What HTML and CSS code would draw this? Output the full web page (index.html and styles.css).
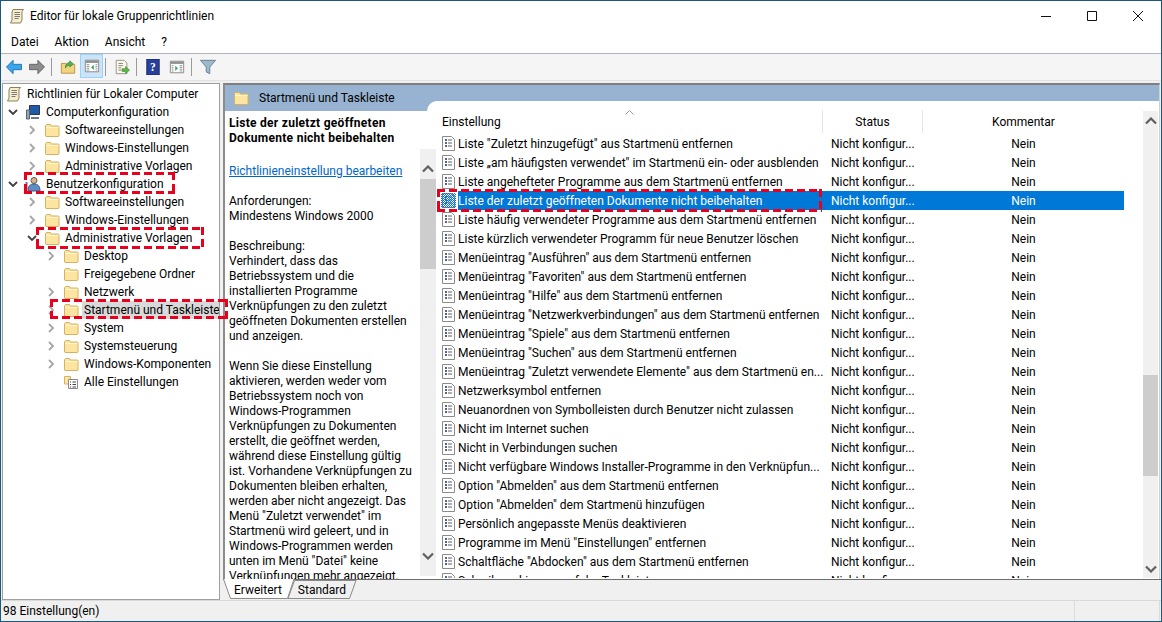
FILE: index.html
```html
<!DOCTYPE html>
<html lang="de">
<head>
<meta charset="utf-8">
<title>Editor für lokale Gruppenrichtlinien</title>
<link rel="stylesheet" href="styles.css">
</head>
<body>
<svg class="defs" width="0" height="0" aria-hidden="true">
  <defs>
    <symbol id="folder" viewBox="0 0 16 16">
      <path d="M1.500 14V3.500l1-1h4l1 1.500h7l.5.5V14l-.5.5h-12.500z" fill="#fbe5a0" stroke="#d4b25f"/>
      <path d="M2 5.500h12.500" stroke="#fff4cf" fill="none"/>
    </symbol>
    <symbol id="doc" viewBox="0 0 13 15">
      <path d="M.5.500h9l3 3v11H.5z" fill="#fff" stroke="#8b8b8b"/>
      <path d="M3 4h2M3 7h2M3 10h2" stroke="#1f2f5f" stroke-width="1.500" fill="none"/>
      <path d="M6 4h4M6 7h4M6 10h4" stroke="#5a5a6a" fill="none"/>
    </symbol>
    <symbol id="scroll" viewBox="0 0 16 16">
      <path d="M4 1.500h10.500l-1.500 2V12l-1.500 3H1.500l1.500-3V4z" fill="#f6eec9" stroke="#8a7f5a"/>
      <path d="M5.500 4.500h5.500M5.500 6.500h5.500M5.500 8.500h5.500M5.500 10.500h4" stroke="#7a7a7a" fill="none"/>
    </symbol>
    <symbol id="more" viewBox="0 0 10 10">
      <path d="M3 1l4 4-4 4" fill="none" stroke="#a6a6a6" stroke-width="1.800"/>
    </symbol>
    <symbol id="open" viewBox="0 0 10 10">
      <path d="M1 3l4 4 4-4" fill="none" stroke="#404040" stroke-width="1.800"/>
    </symbol>
    <symbol id="up" viewBox="0 0 12 8">
      <path d="M1 6.500l5-5 5 5" fill="none" stroke="#606060" stroke-width="2.200"/>
    </symbol>
    <symbol id="down" viewBox="0 0 12 8">
      <path d="M1 1.500l5 5 5-5" fill="none" stroke="#606060" stroke-width="2.200"/>
    </symbol>
  </defs>
</svg>

<div class="window">
  <header class="titlebar">
    <svg class="ico16 title-ico"><use href="#scroll"/></svg>
    <span class="title-text">Editor für lokale Gruppenrichtlinien</span>
    <div class="caption">
      <svg class="cap" viewBox="0 0 46 12"><path d="M18 6.500h10" stroke="#111" fill="none"/></svg>
      <svg class="cap" viewBox="0 0 46 12"><path d="M18.500 1.500h9v9h-9z" stroke="#111" fill="none"/></svg>
      <svg class="cap" viewBox="0 0 46 12"><path d="M18 1l10 10M28 1L18 11" stroke="#111" fill="none"/></svg>
    </div>
  </header>

  <nav class="menubar">
    <span>Datei</span><span>Aktion</span><span>Ansicht</span><span>?</span>
  </nav>

  <div class="toolbar">
    <svg class="tool tool-back" viewBox="0 0 18 18"><path d="M.5 9L8 1.500V6h9.500v6H8v4.500z" fill="#3ba5ea" stroke="#1f6fb5"/></svg>
    <svg class="tool" viewBox="0 0 18 18"><path d="M17.500 9L10 1.500V6H.5v6H10v4.500z" fill="#8d8d8d" stroke="#5f5f5f"/></svg>
    <i class="sep"></i>
    <svg class="tool" viewBox="0 0 18 18"><path d="M1.500 16V5h5l1 1h9v10z" fill="#f3d37f" stroke="#b5923f"/><path d="M6 10c0-4 2-6 5-6V2l4 3.500L11 9V7c-2 0-3 1-5 3z" fill="#55b04a" stroke="#2f7f2f" stroke-width=".7"/></svg>
    <span class="tool-on"><svg class="tool" viewBox="0 0 18 18"><path d="M1.500 2.500h15v13h-15z" fill="#fff" stroke="#7f7f7f"/><path d="M2 3h14v2.500H2z" fill="#8f8f8f"/><path d="M3 7.500h3M3 9.500h3M3 11.500h3M3 13.500h3M13 7.500h2M13 9.500h2M13 11.500h2M13 13.500h2" stroke="#8a8a8a" fill="none"/><path d="M11 7.500v6L8 10.500z" fill="#2fa84f"/></svg></span>
    <i class="sep"></i>
    <svg class="tool" viewBox="0 0 18 18"><path d="M2.500 1.500h9l3 3v12h-12z" fill="#fdf9e8" stroke="#8c8c8c"/><path d="M5 5h5M5 7.500h5M5 10h3M5 12.500h3" stroke="#777" fill="none"/><path d="M9 11h4V8.500l4.500 4-4.500 4V14H9z" fill="#5cb84a" stroke="#3a8a2f" stroke-width=".7"/></svg>
    <i class="sep"></i>
    <svg class="tool" viewBox="0 0 18 18"><path d="M2 0h14v18H2z" fill="#27409a" stroke="#18286a"/><text x="9" y="14" class="help-q">?</text></svg>
    <svg class="tool" viewBox="0 0 18 18"><path d="M1.500 2.500h15v13h-15z" fill="#fff" stroke="#7f7f7f"/><path d="M2 3h14v2.500H2z" fill="#8f8f8f"/><path d="M3 7.500h2M3 9.500h2M3 11.500h2M3 13.500h2M12 7.500h3M12 9.500h3M12 11.500h3M12 13.500h3" stroke="#8a8a8a" fill="none"/><path d="M7 7.500v6l3-3z" fill="#2fa84f"/></svg>
    <i class="sep"></i>
    <svg class="tool" viewBox="0 0 18 18"><path d="M.5 1.500h17L11 9v7.500l-4-2V9z" fill="#9fb9cc" stroke="#5f7a8f"/></svg>
  </div>

  <main class="panes">
    <aside class="tree">
      <div class="node d0"><svg class="tw"></svg><svg class="ico16"><use href="#scroll"/></svg><span>Richtlinien für Lokaler Computer</span></div>
      <div class="node d1"><svg class="tw"><use href="#open"/></svg><svg class="ico16" viewBox="0 0 16 16"><path d="M4.500 1.500h10v9h-10z" fill="#1f5aa8" stroke="#334"/><path d="M1.500 6h3v9h-3z" fill="#9aa5b0" stroke="#567"/><path d="M6 13h8v2H6z" fill="#6a7a8a"/></svg><span>Computerkonfiguration</span></div>
      <div class="node d2"><svg class="tw"><use href="#more"/></svg><svg class="ico16"><use href="#folder"/></svg><span>Softwareeinstellungen</span></div>
      <div class="node d2"><svg class="tw"><use href="#more"/></svg><svg class="ico16"><use href="#folder"/></svg><span>Windows-Einstellungen</span></div>
      <div class="node d2"><svg class="tw"><use href="#more"/></svg><svg class="ico16"><use href="#folder"/></svg><span>Administrative Vorlagen</span></div>
      <div class="node d1"><svg class="tw"><use href="#open"/></svg><svg class="ico16" viewBox="0 0 16 16"><circle cx="9" cy="4.500" r="3" fill="#d8b48c" stroke="#6a5a4a"/><path d="M3 15c0-5 2-7 6-7s6 2 6 7z" fill="#5b8ec4" stroke="#3a5f8a"/><path d="M1.500 6v8" stroke="#777" stroke-width="2"/></svg><span>Benutzerkonfiguration</span></div>
      <div class="node d2"><svg class="tw"><use href="#more"/></svg><svg class="ico16"><use href="#folder"/></svg><span>Softwareeinstellungen</span></div>
      <div class="node d2"><svg class="tw"><use href="#more"/></svg><svg class="ico16"><use href="#folder"/></svg><span>Windows-Einstellungen</span></div>
      <div class="node d2"><svg class="tw"><use href="#open"/></svg><svg class="ico16"><use href="#folder"/></svg><span>Administrative Vorlagen</span></div>
      <div class="node d3"><svg class="tw"><use href="#more"/></svg><svg class="ico16"><use href="#folder"/></svg><span>Desktop</span></div>
      <div class="node d3"><svg class="tw"></svg><svg class="ico16"><use href="#folder"/></svg><span>Freigegebene Ordner</span></div>
      <div class="node d3"><svg class="tw"><use href="#more"/></svg><svg class="ico16"><use href="#folder"/></svg><span>Netzwerk</span></div>
      <div class="node d3 sel"><svg class="tw"><use href="#more"/></svg><svg class="ico16"><use href="#folder"/></svg><span>Startmenü und Taskleiste</span></div>
      <div class="node d3"><svg class="tw"><use href="#more"/></svg><svg class="ico16"><use href="#folder"/></svg><span>System</span></div>
      <div class="node d3"><svg class="tw"><use href="#more"/></svg><svg class="ico16"><use href="#folder"/></svg><span>Systemsteuerung</span></div>
      <div class="node d3"><svg class="tw"><use href="#more"/></svg><svg class="ico16"><use href="#folder"/></svg><span>Windows-Komponenten</span></div>
      <div class="node d3"><svg class="tw"></svg><svg class="ico16" viewBox="0 0 16 16"><path d="M1.500 10V2.500h6v7.500z" fill="#fbe5a0" stroke="#d4b25f"/><path d="M5.500 5.500h9v9h-9z" fill="#fff" stroke="#8b8b8b"/><path d="M7 8h1M7 10.500h1M7 13h1M9.500 8h3.500M9.500 10.500h3.500M9.500 13h3.500" stroke="#444" fill="none"/></svg><span>Alle Einstellungen</span></div>
    </aside>

    <section class="right">
      <div class="ext">
        <div class="ext-head">
          <svg class="ico16"><use href="#folder"/></svg>
          <span>Startmenü und Taskleiste</span>
        </div>
        <div class="ext-body">
          <div class="desc">
            <div class="desc-text">
              <p class="bold">Liste der zuletzt geöffneten<br>Dokumente nicht beibehalten</p>
              <p class="link-p"><a class="link">Richtlinieneinstellung bearbeiten</a></p>
              <p class="req">Anforderungen:<br>Mindestens Windows 2000</p>
              <p>Beschreibung:<br>Verhindert, dass das<br>Betriebssystem und die<br>installierten Programme<br>Verknüpfungen zu den zuletzt<br>geöffneten Dokumenten erstellen<br>und anzeigen.</p>
              <p>Wenn Sie diese Einstellung<br>aktivieren, werden weder vom<br>Betriebssystem noch von<br>Windows-Programmen<br>Verknüpfungen zu Dokumenten<br>erstellt, die geöffnet werden,<br>während diese Einstellung gültig<br>ist. Vorhandene Verknüpfungen zu<br>Dokumenten bleiben erhalten,<br>werden aber nicht angezeigt. Das<br>Menü "Zuletzt verwendet" im<br>Startmenü wird geleert, und in<br>Windows-Programmen werden<br>unten im Menü "Datei" keine<br>Verknüpfungen mehr angezeigt.</p>
            </div>
            <div class="desc-scroll">
              <svg class="arrow"><use href="#up"/></svg>
              <i class="desc-thumb"></i>
              <svg class="arrow arrow-end"><use href="#down"/></svg>
            </div>
          </div>
          <div class="list">
            <div class="table">
              <div class="thead">
                <div class="th c-name">Einstellung<svg class="sort" viewBox="0 0 9 5"><path d="M.5 4.500l4-4 4 4" fill="none" stroke="#999"/></svg></div>
                <div class="th c-status">Status</div>
                <div class="th c-comment">Kommentar</div>
              </div>
              <div class="rows" id="rows"></div>
            </div>
            <div class="list-scroll">
              <svg class="arrow-s"><use href="#up"/></svg>
              <i class="list-thumb"></i>
              <svg class="arrow-s arrow-end2"><use href="#down"/></svg>
            </div>
          </div>
        </div>
      </div>
      <div class="tabs">
        <svg class="tab-shapes" width="140" height="21" viewBox="0 0 140 21">
          <path d="M71.500 1.500H133l-6.500 18H65z" fill="#f0f0f0" stroke="#8a8a8a"/>
          <path d="M.5 0l7 19.500h57l6.500-19.500z" fill="#fff"/>
          <path d="M.5 0l7 19.500h57l6.500-19.500" fill="none" stroke="#8a8a8a"/>
        </svg>
        <span class="tab tab-on">Erweitert</span>
        <span class="tab">Standard</span>
      </div>
    </section>
  </main>

  <footer class="statusbar">
    <span class="st-a">98 Einstellung(en)</span>
    <i class="st-b"></i>
    <i class="st-c"></i>
  </footer>

  <i class="mark m1"></i>
  <i class="mark m2"></i>
  <i class="mark m3"></i>
  <i class="mark m4"></i>
</div>
<script src="app.js"></script>
</body>
</html>
```
FILE: app.js
```js
var names = [
  'Liste "Zuletzt hinzugefügt" aus Startmenü entfernen',
  'Liste „am häufigsten verwendet" im Startmenü ein- oder ausblenden',
  'Liste angehefteter Programme aus dem Startmenü entfernen',
  'Liste der zuletzt geöffneten Dokumente nicht beibehalten',
  'Liste häufig verwendeter Programme aus dem Startmenü entfernen',
  'Liste kürzlich verwendeter Programm für neue Benutzer löschen',
  'Menüeintrag "Ausführen" aus dem Startmenü entfernen',
  'Menüeintrag "Favoriten" aus dem Startmenü entfernen',
  'Menüeintrag "Hilfe" aus dem Startmenü entfernen',
  'Menüeintrag "Netzwerkverbindungen" aus dem Startmenü entfernen',
  'Menüeintrag "Spiele" aus dem Startmenü entfernen',
  'Menüeintrag "Suchen" aus dem Startmenü entfernen',
  'Menüeintrag "Zuletzt verwendete Elemente" aus dem Startmenü en...',
  'Netzwerksymbol entfernen',
  'Neuanordnen von Symbolleisten durch Benutzer nicht zulassen',
  'Nicht im Internet suchen',
  'Nicht in Verbindungen suchen',
  'Nicht verfügbare Windows Installer-Programme in den Verknüpfun...',
  'Option "Abmelden" aus dem Startmenü entfernen',
  'Option "Abmelden" dem Startmenü hinzufügen',
  'Persönlich angepasste Menüs deaktivieren',
  'Programme im Menü "Einstellungen" entfernen',
  'Schaltfläche "Abdocken" aus dem Startmenü entfernen',
  'Schreibmarkierung auf der Taskleiste'
];
var host = document.getElementById('rows');
names.forEach(function (n, i) {
  var r = document.createElement('div');
  r.className = 'row' + (i === 3 ? ' row-sel' : '');
  r.innerHTML = '<svg class="doc"><use href="#doc"/></svg>' +
    '<span class="c-name-t"></span><span class="c-status-t">Nicht konfigur...</span><span class="c-comment-t">Nein</span>';
  r.querySelector('.c-name-t').textContent = n;
  host.appendChild(r);
});
```
FILE: styles.css
```css
* { box-sizing: border-box; }
html, body { margin: 0; height: 100%; }
body {
  font-family: Roboto, "Noto Sans", sans-serif;
  font-size: 12px;
  color: #000;
  overflow: hidden;
}
.defs { position: absolute; }
.window {
  position: relative;
  width: 1162px;
  height: 622px;
  border: 1px solid #1c5a7c;
  background: #f0f0f0;
  display: flex;
  flex-direction: column;
  overflow: hidden;
}
.titlebar {
  height: 29px;
  background: #fff;
  display: flex;
  align-items: center;
  padding-left: 8px;
  flex: none;
}
.title-ico { margin-right: 5px; }
.caption { margin-left: auto; display: flex; }
.cap { width: 46px; height: 12px; }
.menubar {
  height: 24px;
  background: #fff;
  border-bottom: 1px solid #b4b4c0;
  display: flex;
  align-items: center;
  gap: 16px;
  padding-left: 10px;
  flex: none;
}
.toolbar {
  height: 27px;
  background: #f5f5f5;
  border-bottom: 1px solid #e2e2e2;
  display: flex;
  align-items: center;
  padding-left: 1px;
  flex: none;
}
.tool { width: 16px; height: 16px; display: block; flex: none; margin: 0 4px; }
.tool-back { margin-right: 3px; }
.tool-on {
  background: #cce4f7;
  border: 1px solid #99d1ff;
  padding: 3px 2px;
  height: 24px;
  width: 23px;
  margin-top: -2px;
  flex: none;
}
.tool-on .tool { margin: 0 1px; }
.sep { width: 1px; height: 18px; background: #9a9a9a; margin: 0 4px 0 2px; flex: none; }
.help-q { font: bold 13px "Liberation Serif", serif; fill: #fff; text-anchor: middle; }
.panes {
  flex: 1;
  min-height: 0;
  display: flex;
  padding: 2px 0 0 0;
  gap: 3px;
}
.tree {
  width: 218px;
  background: #fff;
  border: 1px solid #a0a0a0;
  padding-top: 1px;
  margin-left: 1px;
  overflow: hidden;
  flex: none;
}
.node {
  height: 18px;
  display: flex;
  align-items: center;
  white-space: nowrap;
}
.node span { padding: 0 2px; margin-left: 3px; line-height: 18px; }
.d1 { padding-left: 4px; }
.d2 { padding-left: 23px; }
.d3 { padding-left: 42px; }
.d0 .tw { width: 0; margin: 0; }
.d0 .ico16 { margin-left: 3px; }
.sel span { background: #d9d9d9; }
.tw { width: 12px; height: 10px; margin-right: 6px; flex: none; }
.ico16 { width: 16px; height: 16px; flex: none; display: block; }
.right {
  flex: 1;
  min-width: 0;
  display: flex;
  flex-direction: column;
}
.ext {
  flex: 1;
  min-height: 0;
  border-style: solid;
  border-width: 2px 1px 0 2px;
  border-color: #7f7f7f #d0d0d0 #fff #8c8c8c;
  background: #fff;
  display: flex;
  flex-direction: column;
  margin-right: 1px;
}
.ext-head {
  height: 26px;
  background: #98b3d1;
  display: flex;
  align-items: center;
  padding-left: 8px;
  gap: 10px;
  flex: none;
}
.ext-body {
  flex: 1;
  min-height: 0;
  display: flex;
}
.desc {
  width: 212px;
  display: flex;
  flex: none;
  padding-left: 4px;
  overflow: hidden;
}
.desc-text {
  width: 191px;
  padding-top: 5px;
  line-height: 15px;
  white-space: nowrap;
  overflow: hidden;
}
.desc-text p { margin: 0 0 15px; }
.desc-text .bold { font-weight: 700; margin-bottom: 18px; letter-spacing: .28px; }
.link { color: #0066cc; text-decoration: underline; }
.desc-scroll {
  width: 16px;
  margin-top: 38px;
  background: #f0f0f0;
  display: flex;
  flex-direction: column;
  align-items: center;
  height: 427px;
  flex: none;
}
.arrow { width: 12px; height: 8px; margin-top: 16px; flex: none; }
.arrow-end { margin-top: auto; margin-bottom: 16px; }
.desc-thumb {
  display: block;
  width: 16px;
  height: 90px;
  margin-top: 6px;
  background: #cdcdcd;
}
.list {
  flex: 1;
  min-width: 0;
  background: #fff;
  margin-top: -10px;
  display: flex;
  position: relative;
  padding-bottom: 1px;
}
.list::before {
  content: "";
  position: absolute;
  left: -10px;
  top: 0;
  width: 20px;
  height: 10px;
  background: #fff;
  border-top-left-radius: 10px;
}
.table { width: 687px; flex: none; overflow: hidden; position: relative; }
.thead { height: 25px; display: flex; align-items: center; margin-top: 8px; }
.th { height: 23px; line-height: 24px; border-right: 1px solid #e5e5e5; position: relative; flex: none; }
.c-name { width: 386px; padding-left: 5px; }
.c-status { width: 100px; text-align: center; }
.c-comment { width: 201px; text-align: center; border-right: 0; }
.sort { position: absolute; width: 9px; height: 5px; top: 0; left: 188px; }
.rows { height: 444px; overflow: hidden; }
.row {
  height: 19px;
  display: flex;
  align-items: center;
  white-space: nowrap;
  position: relative;
}
.doc { width: 13px; height: 15px; margin-left: 5px; flex: none; }
.c-name-t { width: 365px; margin-left: 3px; flex: none; overflow: hidden; }
.c-status-t { width: 100px; padding-left: 8px; flex: none; }
.c-comment-t { width: 201px; text-align: center; flex: none; }
.row-sel::before {
  content: "";
  position: absolute;
  left: 4px;
  top: 2px;
  width: 15px;
  height: 15px;
  background: repeating-conic-gradient(#0078d7 0 25%, transparent 0 50%) 0 0 / 2px 2px;
}
.row-sel .c-name-t,
.row-sel .c-status-t,
.row-sel .c-comment-t { background: #0078d7; color: #fff; height: 19px; line-height: 20px; }
.list-scroll {
  width: 15px;
  margin-left: 19px;
  margin-top: 10px;
  background: #f0f0f0;
  display: flex;
  flex-direction: column;
  align-items: center;
  flex: none;
}
.arrow-s { width: 12px; height: 8px; margin-top: 6px; flex: none; }
.arrow-end2 { margin-top: auto; margin-bottom: 5px; }
.list-thumb {
  display: block;
  width: 15px;
  height: 101px;
  margin-top: 250px;
  background: #cdcdcd;
}
.tabs {
  height: 21px;
  flex: none;
  display: flex;
  align-items: center;
  padding-left: 11px;
  gap: 16px;
  border-top: 1px solid #6e6e6e;
  position: relative;
}
.tab-shapes { position: absolute; left: 0; top: -1px; }
.tab { position: relative; }
.statusbar {
  height: 21px;
  flex: none;
  border-top: 1px solid #d9d9d9;
  display: flex;
  align-items: center;
  padding-left: 2px;
}
.st-a { width: 1071px; flex: none; }
.st-b { width: 1px; height: 20px; background: #dcdcdc; }
.st-c { width: 85px; height: 20px; border-right: 1px solid #dcdcdc; }
.mark {
  position: absolute;
  background:
    repeating-linear-gradient(90deg, #e8001c 0 8px, transparent 8px 12px) top / 100% 3px no-repeat,
    repeating-linear-gradient(90deg, #e8001c 0 8px, transparent 8px 12px) bottom / 100% 3px no-repeat,
    repeating-linear-gradient(180deg, #e8001c 0 8px, transparent 8px 12px) left / 3px 100% no-repeat,
    repeating-linear-gradient(180deg, #e8001c 0 8px, transparent 8px 12px) right / 3px 100% no-repeat;
}
.m1 { left: 23px; top: 171px; width: 151px; height: 22px; }
.m2 { left: 35px; top: 226px; width: 168px; height: 22px; }
.m3 { left: 49px; top: 298px; width: 178px; height: 20px; }
.m4 { left: 436px; top: 188px; width: 385px; height: 23px; }
```
